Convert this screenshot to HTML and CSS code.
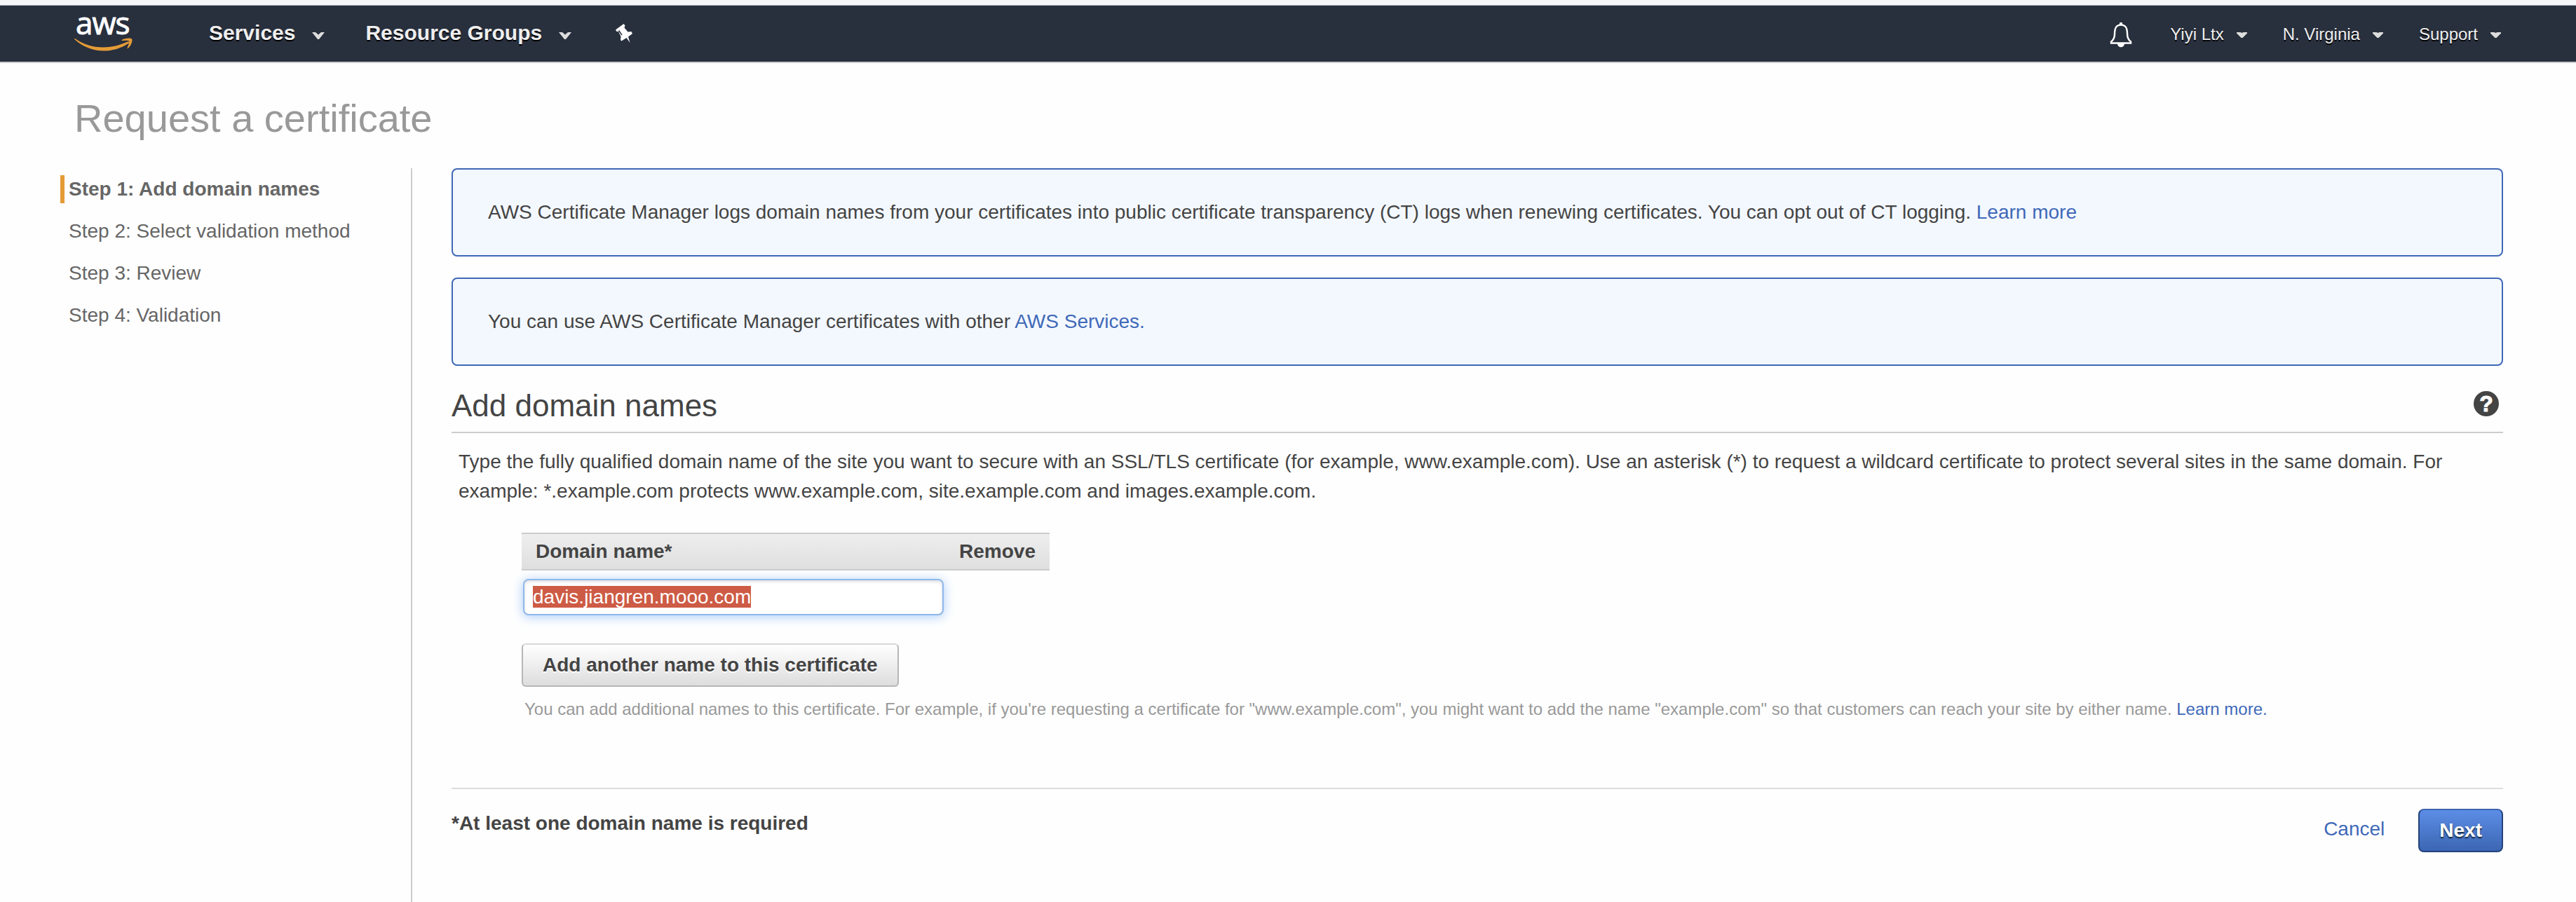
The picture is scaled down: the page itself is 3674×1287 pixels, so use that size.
FILE: index.html
```html
<!DOCTYPE html>
<html lang="en">
<head>
<meta charset="utf-8">
<title>Request a certificate</title>
<link rel="stylesheet" href="styles.css">
</head>
<body>
<header class="topbar">
  <a class="logo" aria-label="aws">
    <span class="logo-text">aws</span>
    <svg class="logo-smile" width="83" height="19" viewBox="0 0 83 19"><path d="M1 1C12 9 26 13.500 41 13.500c12 0 24-3 35-8 2-.8 3 1 1.500 2.200C67 15 54 18.500 42 18.500 26 18.500 11 12 .5 2.200-.2 1.200.2.400 1 1z"/><path d="M67.500 3.200C71 .2 80 0 81.800 1.200c2 2-.5 10-5.300 13.800-.7.500-1.300.2-1-.5 1.200-2.800 3.500-8.500 2.500-10-1-1.300-6.800-.7-9.800-.4-.9 0-1.100-.5-.7-.9z"/></svg>
  </a>
  <nav class="main-nav">
    <a class="nav-item">Services<svg class="chev" width="18" height="10" viewBox="0 0 18 10"><path d="M0 0h5l4 3.500L13 0h5l-8 10H8z"/></svg></a>
    <a class="nav-item">Resource Groups<svg class="chev" width="18" height="10" viewBox="0 0 18 10"><path d="M0 0h5l4 3.500L13 0h5l-8 10H8z"/></svg></a>
    <svg class="pin" width="25" height="28" viewBox="0 0 25 28"><path d="M0 8.500L11.500 0l2 2.500-1 3 5 6 5-.5 1.500 3-6 4.500 2.500 8.500-5-7L8.500 24.500 7 23l.5-5L4 11H1.500z"/><path class="pin-slot" d="M4.500 9.500l4.500 6.500"/></svg>
  </nav>
  <nav class="side-nav">
    <svg class="bell" width="32" height="36" viewBox="0 0 32 36"><path class="bell-line" d="M2 29.500v-2c4-3 5-6 5-11C7 8 9 3.500 16 3.500S25 8 25 16.500c0 5 1 8 5 11v2z"/><path class="bell-fill" d="M14 4V1.500a2 2 0 0 1 4 0V4zM11 30h10c0 7-10 7-10 0z"/></svg>
    <a class="side-item">Yiyi Ltx<svg class="caret" width="15" height="8" viewBox="0 0 15 8"><path d="M0 0h5.500l2 1L9.500 0H15v1.500L8.500 8h-2L0 1.500z"/></svg></a>
    <a class="side-item">N. Virginia<svg class="caret" width="15" height="8" viewBox="0 0 15 8"><path d="M0 0h5.500l2 1L9.500 0H15v1.500L8.500 8h-2L0 1.500z"/></svg></a>
    <a class="side-item">Support<svg class="caret" width="15" height="8" viewBox="0 0 15 8"><path d="M0 0h5.500l2 1L9.500 0H15v1.500L8.500 8h-2L0 1.500z"/></svg></a>
  </nav>
</header>
<h1 class="page-title">Request a certificate</h1>
<div class="layout">
  <aside class="steps">
    <div class="step active">Step 1: Add domain names</div>
    <div class="step">Step 2: Select validation method</div>
    <div class="step">Step 3: Review</div>
    <div class="step">Step 4: Validation</div>
  </aside>
  <main class="content">
    <div class="notice">AWS Certificate Manager logs domain names from your certificates into public certificate transparency (CT) logs when renewing certificates. You can opt out of CT logging. <a class="link">Learn more</a></div>
    <div class="notice">You can use AWS Certificate Manager certificates with other <a class="link">AWS Services.</a></div>
    <div class="section-head">
      <h2 class="section-title">Add domain names</h2>
      <span class="help">?</span>
    </div>
    <p class="intro">Type the fully qualified domain name of the site you want to secure with an SSL/TLS certificate (for example, www.example.com). Use an asterisk (*) to request a wildcard certificate to protect several sites in the same domain. For example: *.example.com protects www.example.com, site.example.com and images.example.com.</p>
    <div class="domains">
      <div class="table-head"><span>Domain name*</span><span>Remove</span></div>
      <div class="field"><span class="selected">davis.jiangren.mooo.com</span></div>
      <button class="btn">Add another name to this certificate</button>
      <p class="hint">You can add additional names to this certificate. For example, if you're requesting a certificate for "www.example.com", you might want to add the name "example.com" so that customers can reach your site by either name. <a class="link">Learn more.</a></p>
    </div>
    <div class="footer">
      <strong class="required">*At least one domain name is required</strong>
      <div class="actions"><a class="link cancel">Cancel</a><button class="btn primary">Next</button></div>
    </div>
  </main>
</div>
</body>
</html>
```
FILE: styles.css
```css
* { box-sizing: border-box; }
body { margin: 0; height: 1287px; overflow: hidden; background: #fefefe; color: #444; font: 28px/42px "Liberation Sans", Arial, sans-serif; display: flex; flex-direction: column; }
.topbar { height: 90px; flex: none; padding: 8px 107px 0 106px; background: #282f3d; border-bottom: 2px solid #ccccd0; box-shadow: inset 0 7px #f4f6f8, inset 0 8px #b9bec4; display: flex; align-items: flex-start; }
.logo { width: 84px; height: 80px; display: flex; flex-direction: column; margin-right: 108px; }
.logo-text { height: 46px; padding-left: 2px; color: #fff; font: 44px/49px "Open Sans", sans-serif; letter-spacing: -1px; -webkit-text-stroke: 1px #fff; }
.logo-smile { fill: #e49b36; display: block; }
.main-nav { display: flex; flex: 1; height: 80px; }
.nav-item { display: flex; color: #eee; font-weight: bold; font-size: 30px; line-height: 77px; text-shadow: 0 2px #000; }
.chev { fill: #ddd; margin: 38px 58px 0 24px; }
.pin { fill: #fff; margin-top: 26px; margin-left: 5px; }
.pin-slot { fill: none; stroke: #282f3d; stroke-width: 1.5; }
.side-nav { display: flex; height: 80px; }
.bell { margin: 24px 54px 0 0; }
.bell-line { fill: none; stroke: #fff; stroke-width: 2.5; }
.bell-fill { fill: #fff; }
.side-item { display: flex; color: #eee; font-size: 24px; line-height: 81px; text-shadow: 0 2px #000; }
.caret { fill: #ddd; margin: 38px 51px 0 18px; }
.side-item:last-child .caret { margin-right: 0; }
.page-title { margin: 0; height: 150px; padding: 47px 0 0 106px; color: #999; font-size: 56px; line-height: 64px; font-weight: normal; flex: none; }
.layout { display: flex; flex: 1; padding-right: 104px; }
.steps { width: 588px; padding: 10px 0 0 86px; border-right: 2px solid #ccc; color: #666; flex: none; }
.step { height: 40px; line-height: 39px; margin-bottom: 20px; padding-left: 6px; border-left: 6px solid transparent; }
.step.active { border-color: #e49b36; font-weight: bold; }
.content { flex: 1; padding-left: 56px; }
.notice { height: 126px; margin-bottom: 30px; padding: 40px 50px; border: 2px solid #3f68b5; border-radius: 8px; background: #f3f8fe; }
.link { color: #4069b8; }
.section-head { display: flex; justify-content: space-between; height: 66px; border-bottom: 2px solid #ccc; }
.section-title { margin: 0; font-size: 44px; line-height: 53px; font-weight: normal; }
.help { width: 36px; height: 36px; margin: 6px 6px 0 0; border-radius: 50%; background: #444; color: #fff; font-weight: bold; font-size: 32px; line-height: 37px; text-align: center; -webkit-text-stroke: 1px #fff; }
.intro { margin: 20px 10px 0; }
.domains { padding-left: 100px; margin-top: 38px; }
.table-head { width: 753px; height: 54px; padding: 0 20px; border: solid #ccc; border-width: 2px 0; background: linear-gradient(#eee, #dfdfdf); display: flex; justify-content: space-between; font-weight: bold; line-height: 50px; }
.field { width: 600px; height: 52px; margin: 12px 0 40px 2px; padding: 8px 12px; border: 2px solid #8fb8ec; border-radius: 8px; background: #fff; box-shadow: inset 0 2px 4px #ddd, 0 2px 16px #a9cbf8; display: flex; }
.selected { height: 31px; line-height: 31px; color: #fff; background: #cd5b45; }
.btn { display: block; height: 62px; padding: 0 28px; border: 2px solid #b7b7b7; border-top-color: #d8d8d8; border-radius: 6px; background: linear-gradient(#fff, #ddd); color: #444; font: bold 28px/56px "Liberation Sans", Arial, sans-serif; text-shadow: 0 2px #fff; }
.hint { margin: 11px 0 0 4px; color: #999; font-size: 24px; line-height: 42px; }
.footer { margin-top: 91px; border-top: 2px solid #ddd; display: flex; justify-content: space-between; }
.required { padding-top: 28px; }
.actions { display: flex; padding-top: 28px; }
.cancel { margin-right: 48px; padding-top: 8px; }
.primary { border-color: #25427c; border-top-color: #3c63ae; border-radius: 8px; background: linear-gradient(#5c8de6, #3c66b3); color: #fff; text-shadow: 0 2px 2px #123; }
```
